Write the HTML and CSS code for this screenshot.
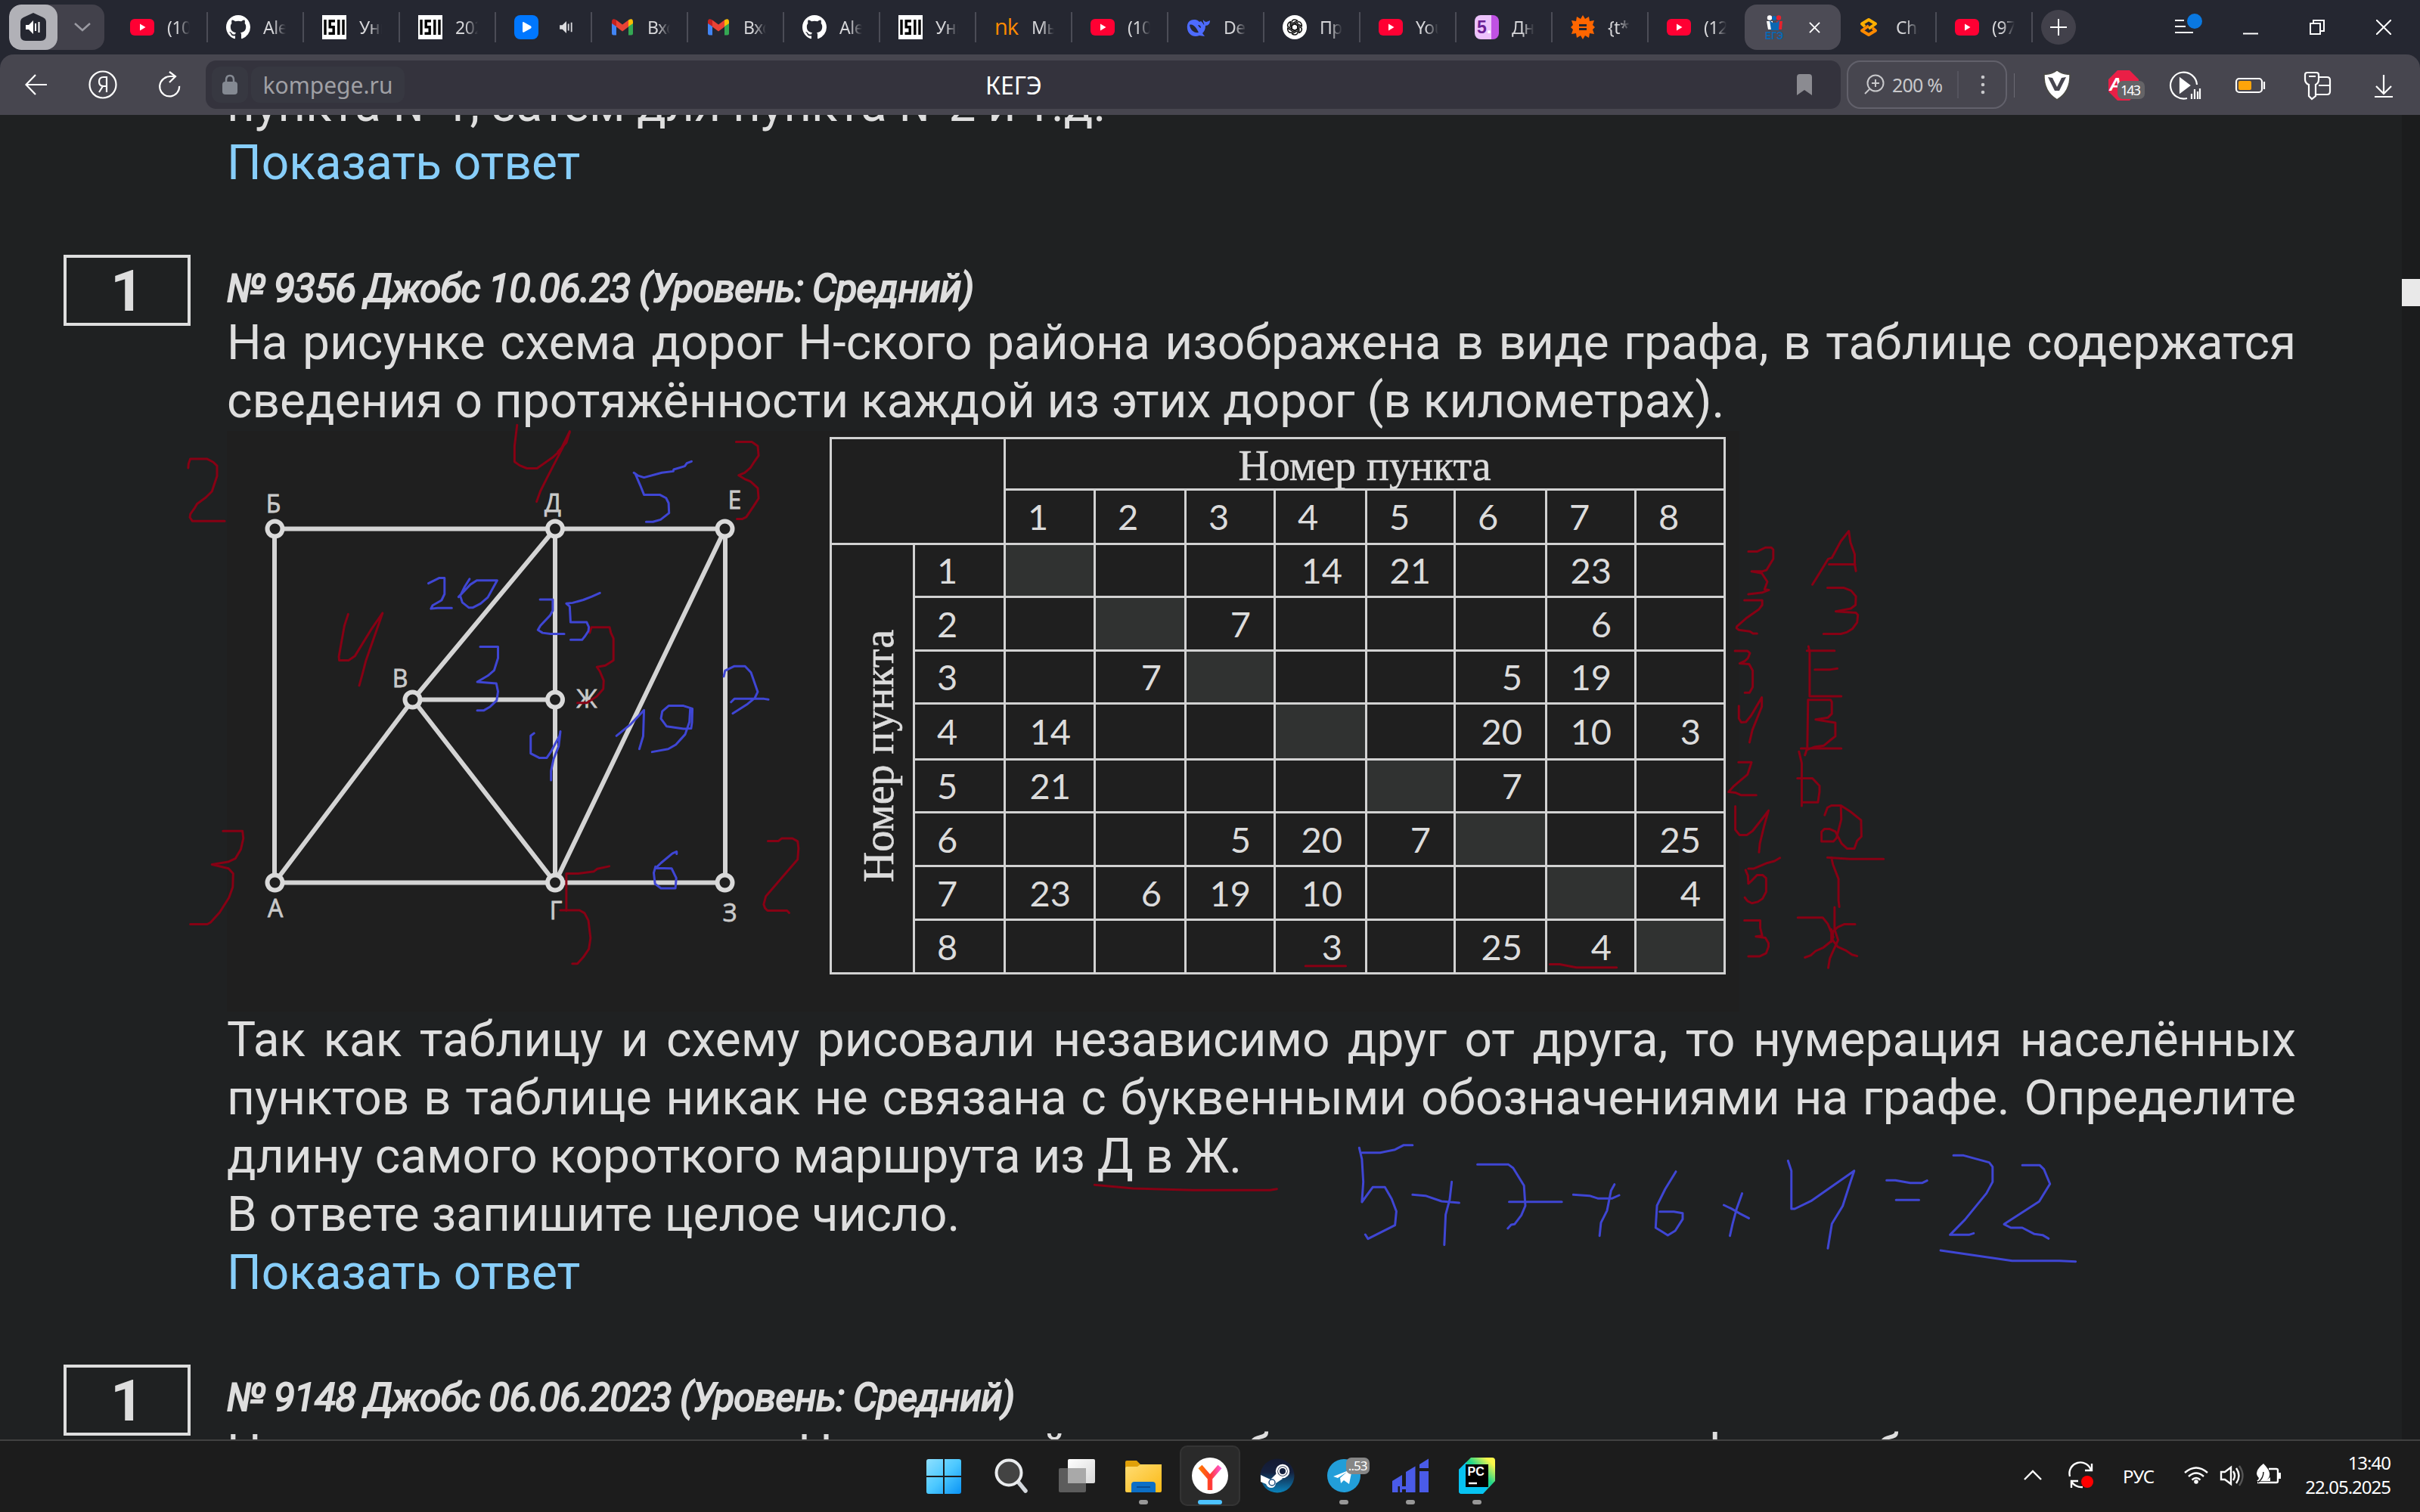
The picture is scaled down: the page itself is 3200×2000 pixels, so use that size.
FILE: index.html
```html
<!DOCTYPE html>
<html lang="ru">
<head>
<meta charset="utf-8">
<title>КЕГЭ</title>
<link rel="stylesheet" href="styles.css">
</head>
<body>
<svg class="defs" width="0" height="0">
  <symbol id="yt" viewBox="0 0 32 32"><rect y="5" width="32" height="22" rx="6" fill="#ff0033"/><path d="M13 11.500l7.500 4.500-7.500 4.500z" fill="#fff"/></symbol>
  <symbol id="gh" viewBox="0 0 16 16"><path fill="#fff" d="M8 0C3.58 0 0 3.58 0 8c0 3.54 2.29 6.53 5.47 7.59.4.07.55-.17.55-.38 0-.19-.01-.82-.01-1.49-2.01.37-2.53-.49-2.69-.94-.09-.23-.48-.94-.82-1.13-.28-.15-.68-.52-.01-.53.63-.01 1.08.58 1.23.82.72 1.21 1.87.87 2.33.66.07-.52.28-.87.51-1.07-1.78-.2-3.64-.89-3.64-3.95 0-.87.31-1.59.82-2.15-.08-.2-.36-1.02.08-2.12 0 0 .67-.21 2.2.82.64-.18 1.32-.27 2-.27s1.36.09 2 .27c1.53-1.04 2.2-.82 2.2-.82.44 1.1.16 1.92.08 2.12.51.56.82 1.27.82 2.15 0 3.07-1.87 3.75-3.65 3.95.29.25.54.73.54 1.48 0 1.07-.01 1.93-.01 2.2 0 .21.15.46.55.38A8.01 8.01 0 0 0 16 8c0-4.42-3.58-8-8-8z"/></symbol>
  <symbol id="uni" viewBox="0 0 32 32"><path fill="#fff" d="M0 0h32v32H0z"/><path fill="none" stroke="#000" stroke-width="3.400" d="M4 6v20M17 7.700H10.200v8h5v8.600H8.500M21.800 6v20M28 6v20"/></symbol>
  <symbol id="gm" viewBox="0 0 32 32"><path fill="#4285f4" d="M2 10v14q0 2.500 2.500 2.500H8V14z"/><path fill="#34a853" d="M30 10v14q0 2.500-2.500 2.500H24V14z"/><path fill="#c5221f" d="M8 15V6.500Q2 3 2 9v2z"/><path fill="#fbbc04" d="M24 15V6.500Q30 3 30 9v2z"/><path fill="#ea4335" d="M8 6.500l8 6 8-6v9l-8 6-8-6z"/></symbol>
  <symbol id="spk" viewBox="0 0 20 18"><path fill="currentColor" d="M0 6h4l6-6v18l-6-6H0z"/><path d="M13 4v10M17.500 2v14" stroke="currentColor" stroke-width="2"/></symbol>
</svg>

<header class="tabbar">
  <div class="audio">
    <div class="audio-on"><svg width="36" height="38" viewBox="0 0 36 38"><path fill="#252731" d="M18 0l13 6q4 2 4 6v18q0 7-7 7H8q-7 0-7-7V12q0-4 4-6z"/><svg x="8" y="10" width="20" height="18" color="#fff"><use href="#spk"/></svg></svg></div>
    <div class="audio-more"><svg width="24" height="14" viewBox="0 0 24 14"><path d="M2 2l10 9L22 2" fill="none" stroke="#9a9aa2" stroke-width="2.500"/></svg></div>
  </div>
  <div class="tab"><svg class="fav"><use href="#yt"/></svg><span class="name">(10</span></div>
  <div class="tab"><svg class="fav"><use href="#gh"/></svg><span class="name">Ale</span></div>
  <div class="tab"><svg class="fav"><use href="#uni"/></svg><span class="name">Уни</span></div>
  <div class="tab"><svg class="fav"><use href="#uni"/></svg><span class="name">202</span></div>
  <div class="tab"><svg class="fav" viewBox="0 0 32 32"><rect width="32" height="32" rx="8" fill="#0077ff"/><path d="M11 9.500q1-1 2 0l9 5q1.500 1.500 0 3l-9 5q-2 .8-2-1z" fill="#fff"/></svg><svg class="snd"><use href="#spk"/></svg></div>
  <div class="tab"><svg class="fav"><use href="#gm"/></svg><span class="name">Вхо</span></div>
  <div class="tab"><svg class="fav"><use href="#gm"/></svg><span class="name">Вхо</span></div>
  <div class="tab"><svg class="fav"><use href="#gh"/></svg><span class="name">Ale</span></div>
  <div class="tab"><svg class="fav"><use href="#uni"/></svg><span class="name">Уни</span></div>
  <div class="tab"><span class="fav nk">nk</span><span class="name">Мы</span></div>
  <div class="tab"><svg class="fav"><use href="#yt"/></svg><span class="name">(10</span></div>
  <div class="tab"><svg class="fav" viewBox="0 0 32 32"><path fill="#4d6bfe" d="M1 18C0 10 4 6 10 6c4 0 5 1 7 3l2-1c2 2 3 3 4 5 1-2-2-4-1-7 1 2 3 3 4 3 2-1 4-1 5-2 0 4-2 7-6 7 0 5-2 8-4 10l3 4-7-1C8 30 2 25 1 18z"/><path fill="#252731" d="M4 13c5-2 9 4 12 10-6 1-11-3-12-10zM15 13q4 0 4 4-3-1-4-4z"/></svg><span class="name">Dee</span></div>
  <div class="tab"><svg class="fav" viewBox="0 0 32 32"><circle cx="16" cy="16" r="16" fill="#fff"/><g fill="none" stroke="#111" stroke-width="1.500"><path id="kn" d="M16 20.500l-4-2.300V10q0-4 4-4 2 0 3.500 1.400L13 11"/><use href="#kn" transform="rotate(60 16 16)"/><use href="#kn" transform="rotate(120 16 16)"/><use href="#kn" transform="rotate(180 16 16)"/><use href="#kn" transform="rotate(240 16 16)"/><use href="#kn" transform="rotate(300 16 16)"/></g></svg><span class="name">При</span></div>
  <div class="tab"><svg class="fav"><use href="#yt"/></svg><span class="name">You</span></div>
  <div class="tab"><span class="fav five">5<i>.</i></span><span class="name">Дне</span></div>
  <div class="tab"><svg class="fav" viewBox="0 0 32 32"><path fill="#ff6600" d="M16 0l3 5 5-3 1 6 6-1-2 6 3 3-3 3 2 6-6-1-1 6-5-3-3 5-3-5-5 3-1-6-6 1 2-6-3-3 3-3-2-6 6 1 1-6 5 3z"/><path stroke="#252731" stroke-width="3" d="M11 13.500h10M11 18.500h10"/></svg><span class="name">{t*</span></div>
  <div class="tab bare"><svg class="fav"><use href="#yt"/></svg><span class="name">(12</span></div>
  <div class="tab active"><svg class="fav" viewBox="0 0 32 32"><circle cx="9" cy="3.500" r="3.200" fill="#fff"/><path fill="#fff" d="M5 8h8v11H7z"/><circle cx="21" cy="3.500" r="3.200" fill="#e8222e"/><path fill="#e8222e" d="M18 8h8l-1 11h-6z"/><path fill="#0a67b2" d="M9 7l4 3h5l4-3-1 13H11z"/><circle cx="15" cy="4" r="3" fill="#0a67b2"/><text x="3" y="32" class="ege" textLength="24" lengthAdjust="spacingAndGlyphs">ЕГЭ</text></svg><svg class="close" viewBox="0 0 16 16"><path d="M1 1l14 14M15 1L1 15" stroke="#fff" stroke-width="2"/></svg></div>
  <div class="tab"><svg class="fav" viewBox="0 0 32 32"><g fill="none" stroke-width="4" stroke-linejoin="round"><path stroke="#ffb000" d="M8 15l-4-3.500L13 6l9 5.500-9 6.500"/><path stroke="#ff8a00" d="M18 17l4 3.500L13 26l-9-5.500L13 14"/></g></svg><span class="name">Cha</span></div>
  <div class="tab"><svg class="fav"><use href="#yt"/></svg><span class="name">(97</span></div>
  <div class="plus"><svg width="24" height="24" viewBox="0 0 24 24"><path d="M12 1v22M1 12h22" stroke="#fff" stroke-width="2"/></svg></div>
  <div class="win">
    <svg width="48" height="40" viewBox="0 0 48 40"><path d="M8 11h12M8 19h14M8 27h24" stroke="#fff" stroke-width="2"/><circle cx="34" cy="12" r="10" fill="#0a78e0"/></svg>
    <svg width="20" height="20" viewBox="0 0 20 20"><path d="M0 18.500h20" stroke="#fff" stroke-width="2"/></svg>
    <svg width="20" height="20" viewBox="0 0 20 20"><path d="M1 5h13v14H1zM5 5V1h14v14h-5" fill="none" stroke="#fff" stroke-width="2"/></svg>
    <svg width="20" height="20" viewBox="0 0 20 20"><path d="M0 0l20 20M20 0L0 20" stroke="#fff" stroke-width="2"/></svg>
  </div>
</header>

<nav class="toolbar">
  <div class="navs">
    <svg width="30" height="28" viewBox="0 0 30 28"><path d="M29 14H2M14 1L1.500 14 14 27" fill="none" stroke="#fff" stroke-width="2.200"/></svg>
    <svg width="38" height="38" viewBox="0 0 38 38"><circle cx="19" cy="19" r="17.500" fill="none" stroke="#fff" stroke-width="2.200"/><path d="M24 29V9h-4q-6 0-6 6t6 6h4M19 21l-5 8" fill="none" stroke="#fff" stroke-width="2.200"/></svg>
    <svg width="32" height="36" viewBox="0 0 32 36"><path d="M10 9A13 13 0 1 0 29 18" fill="none" stroke="#fff" stroke-width="2.200" transform="rotate(8 16 20)"/><path d="M16 1l8 6-8 8M24 7H17q-4 0-7 2" fill="none" stroke="#fff" stroke-width="2.200"/></svg>
  </div>
  <div class="omni">
    <div class="lock"><svg width="22" height="28" viewBox="0 0 22 28"><path d="M6 12V8q0-6 5-6t5 6v4" fill="none" stroke="#848992" stroke-width="2.500"/><rect x="1" y="10" width="20" height="17" rx="4" fill="#848992"/></svg></div>
    <div class="url">kompege.ru</div>
    <div class="ptitle">КЕГЭ</div>
    <svg class="bm" width="22" height="28" viewBox="0 0 22 28"><path fill="#8b8b91" d="M1 4q0-4 4-4h12q4 0 4 4v24l-10-7-10 7z"/></svg>
  </div>
  <div class="zoom">
    <svg width="28" height="28" viewBox="0 0 28 28"><path d="M8 20l-6 6" stroke="#c8c8cb" stroke-width="2"/><circle cx="16" cy="12" r="10.500" fill="none" stroke="#c8c8cb" stroke-width="2"/><path d="M16 7v10M11 12h10" stroke="#c8c8cb" stroke-width="2"/></svg>
    <span class="pct">200 %</span><span class="zdiv"></span>
    <svg class="dots" width="6" height="28" viewBox="0 0 6 28"><g fill="#c8c8cb"><circle cx="3" cy="4" r="2.300"/><circle cx="3" cy="14" r="2.300"/><circle cx="3" cy="24" r="2.300"/></g></svg>
  </div>
  <svg class="exts" width="537" height="78" viewBox="2663 72 537 78">
    <path d="M2663 96v32" stroke="#6b6a73" stroke-width="2"/>
    <path d="M2703 97q9 1 17-5 8 6 17 5 1 23-17 34-18-11-17-34z" fill="#fff" stroke="#4a4a44" stroke-width="1.500"/><path d="M2708 101l6 1 6 12 6-12 6-1-9 18h-6z" fill="#47464f"/>
    <path d="M2800 92h16l12 12v16l-12 12h-16l-12-12v-16z" fill="#ea1f46"/><text x="2789" y="119" class="abp">A</text><rect x="2800" y="106" width="36" height="24" rx="7" fill="#656467"/><text x="2804" y="125" class="cnt" textLength="27">143</text>
    <g fill="none" stroke="#fff" stroke-width="2.200"><path d="M2892 129a17.500 17.500 0 1 1 13-18"/><path d="M2883 103v18l12-9z" fill="#fff"/><path d="M2898 130v-7M2902 130v-13M2906 130v-10M2909 130v-14"/>
    <rect x="2957" y="103" width="34" height="18" rx="4"/><path d="M2994 107v10"/><path d="M3053 126v-15q-5-2-5-7v-6q0-3 3-3h12q3 0 3 3v6q0 5-4 7v15l-5 4zM3053 100h9"/><path d="M3067 101h10q4 0 4 4v15q0 4-4 4h-14M3066 112h15"/>
    <path d="M3152 98v25M3142 113l10 10 10-10M3140 127h24"/></g>
    <rect x="2960" y="106" width="17" height="12" rx="2" fill="#ffa40a"/>
  </svg>
</nav>

<main class="page">
  <div class="content">
    <p class="txt">пункта №1, затем для пункта №2 и т.д.</p>
    <a class="ans">Показать ответ</a>
    <section class="task">
      <div class="num">1</div>
      <div class="body">
        <h2>№ 9356 Джобс 10.06.23 (Уровень: Средний)</h2>
        <p class="txt just">На рисунке схема дорог Н-ского района изображена в виде графа, в таблице содержатся сведения о протяжённости каждой из этих дорог (в километрах).</p>
        <div class="figure">
          <svg class="graph" width="797" height="768" viewBox="300 570 797 768">
            <g fill="none" stroke="#d4d4d4" stroke-width="6"><path d="M363 699.500H959V1167.500H363zM734 699.500V1167.500M734 699.500L546 925.500H734M546 925.500L363 1167.500M546 925.500L734 1167.500L959 699.500"/></g>
            <g fill="#1f1f1f" stroke="#dadada" stroke-width="6"><circle cx="363.500" cy="699.500" r="10"/><circle cx="734" cy="699.500" r="10"/><circle cx="958.500" cy="699.500" r="10"/><circle cx="545.500" cy="925.500" r="10"/><circle cx="734" cy="925.500" r="10"/><circle cx="363.500" cy="1167.500" r="10"/><circle cx="734" cy="1167.500" r="10"/><circle cx="958.500" cy="1167.500" r="10"/></g>
            <g class="lbl"><text x="361.500" y="678">Б</text><text x="731" y="677">Д</text><text x="971.500" y="673">Е</text><text x="529" y="909">В</text><text x="776" y="936">Ж</text><text x="364" y="1213">А</text><text x="735" y="1216">Г</text><text x="965" y="1219">З</text></g>
          </svg>
          <div class="grid">
            <div class="corner"></div><div class="top">Номер пункта</div>
            <b>1</b><b>2</b><b>3</b><b>4</b><b>5</b><b>6</b><b>7</b><b>8</b>
            <div class="side"><span>Номер пункта</span></div>
            <b>1</b><i class="d"></i><i></i><i></i><i>14</i><i>21</i><i></i><i>23</i><i></i>
            <b>2</b><i></i><i class="d"></i><i>7</i><i></i><i></i><i></i><i>6</i><i></i>
            <b>3</b><i></i><i>7</i><i class="d"></i><i></i><i></i><i>5</i><i>19</i><i></i>
            <b>4</b><i>14</i><i></i><i></i><i class="d"></i><i></i><i>20</i><i>10</i><i>3</i>
            <b>5</b><i>21</i><i></i><i></i><i></i><i class="d"></i><i>7</i><i></i><i></i>
            <b>6</b><i></i><i></i><i>5</i><i>20</i><i>7</i><i class="d"></i><i></i><i>25</i>
            <b>7</b><i>23</i><i>6</i><i>19</i><i>10</i><i></i><i></i><i class="d"></i><i>4</i>
            <b>8</b><i></i><i></i><i></i><i>3</i><i></i><i>25</i><i>4</i><i class="d"></i>
          </div>
        </div>
        <p class="txt just">Так как таблицу и схему рисовали независимо друг от друга, то нумерация населённых пунктов в таблице никак не связана с буквенными обозначениями на графе. Определите длину самого короткого маршрута из Д в Ж.</p>
        <p class="txt">В ответе запишите целое число.</p>
        <a class="ans">Показать ответ</a>
      </div>
    </section>
    <section class="task">
      <div class="num">1</div>
      <div class="body">
        <h2>№ 9148 Джобс 06.06.2023 (Уровень: Средний)</h2>
        <p class="txt just">На рисунке схема дорог Н-ского района изображена в виде графа, в таблице содержатся сведения о протяжённости каждой из этих дорог (в километрах).</p>
      </div>
    </section>
  </div>
  <div class="scroll"><div class="thumb"></div></div>
</main>

<footer class="taskbar">
  <div class="apps">
    <div class="app"><svg viewBox="0 0 48 48"><defs><linearGradient id="w" x1="0" y1="0" x2="1" y2="1"><stop offset="0" stop-color="#8fe0ff"/><stop offset=".5" stop-color="#4cc8ff"/><stop offset="1" stop-color="#0a93f5"/></linearGradient></defs><path fill="url(#w)" d="M4 2h19v22H1V5q0-3 3-3zM25 2h19q3 0 3 3v19H25zM1 26h22v22H4q-3 0-3-3zM25 26h22v19q0 3-3 3H25z"/></svg></div>
    <div class="app"><svg viewBox="0 0 48 48"><path d="M35 33l9 11" stroke="#d3d7dc" stroke-width="5.500" stroke-linecap="round"/><circle cx="22" cy="20" r="16.500" fill="#434343" stroke="#eaecee" stroke-width="4"/></svg></div>
    <div class="app"><svg viewBox="0 0 48 48"><defs><linearGradient id="tv" x1="0" y1="0" x2="1" y2="1"><stop offset="0" stop-color="#fff"/><stop offset="1" stop-color="#d8d8d8"/></linearGradient></defs><rect y="14" width="36" height="32" rx="2" fill="#5c5c5c"/><rect x="12" y="2" width="36" height="32" rx="2" fill="url(#tv)"/><path d="M12 14h24v20H12z" fill="#a9a9a9"/></svg></div>
    <div class="app run"><svg viewBox="0 0 48 48"><defs><linearGradient id="fo" x1="0" y1="0" x2="1" y2="1"><stop offset="0" stop-color="#ffdd74"/><stop offset="1" stop-color="#fbb915"/></linearGradient></defs><path fill="#e0a009" d="M0 6q0-2 2-2h13l5 5h26q2 0 2 2v6H0z"/><path fill="url(#fo)" d="M0 14q0-2 2-2h14l4-3h28v35q0 2-2 2H2q-2 0-2-2z"/><path fill="#0c6fc6" d="M8 46V36q0-4 4-4h24q4 0 4 4v10z"/><path d="M15 39h18" stroke="#084c92" stroke-width="2"/></svg></div>
    <div class="app sel run"><svg viewBox="0 0 48 48"><defs><linearGradient id="ya" gradientUnits="userSpaceOnUse" x1="10" y1="0" x2="39" y2="0"><stop offset="0" stop-color="#ff7a00"/><stop offset=".5" stop-color="#ff3a2e"/><stop offset="1" stop-color="#ff58e0"/></linearGradient></defs><circle cx="24" cy="24" r="24" fill="#fff"/><path d="M11 12l13 15v16M24 27l13-15" fill="none" stroke="url(#ya)" stroke-width="6.500"/></svg></div>
    <div class="app"><svg viewBox="0 0 48 48"><defs><linearGradient id="st" x1="0" y1="0" x2="0" y2="1"><stop offset="0" stop-color="#141a31"/><stop offset=".4" stop-color="#15213f"/><stop offset="1" stop-color="#0a84bd"/></linearGradient></defs><circle cx="24" cy="24" r="22.500" fill="url(#st)"/><path d="M2 23l13 6 9-9 7 8-9 6q-1 6-6 6-5 0-7-5l-7-3z" fill="#fff"/><circle cx="31" cy="18" r="8" fill="#15213f" stroke="#fff" stroke-width="2.500"/><circle cx="31" cy="18" r="5" fill="none" stroke="#fff" stroke-width="2"/><circle cx="17" cy="33" r="4" fill="none" stroke="#205080" stroke-width="1.500"/></svg></div>
    <div class="app run"><svg viewBox="0 0 48 48"><circle cx="24" cy="24" r="22" fill="#229ed9"/><path fill="#fff" d="M10 25l25-10-4 20-7-5-4 4-1-7 9-8-12 8z"/></svg><span class="badge">..53</span></div>
    <div class="app run"><svg viewBox="0 0 48 48"><path fill="#4a5be8" d="M0 31l13-8v15h5V19l12.500-7.500V46H18v-4h-5v4h-3v-8H7.500v8H0zM36 9l12-7.500V14H36zM36 18h12v28H36z"/></svg></div>
    <div class="app run"><svg viewBox="0 0 48 48"><defs><linearGradient id="pc" x1="0" y1="1" x2="1" y2="0"><stop offset=".35" stop-color="#07c3f2"/><stop offset=".6" stop-color="#21d789"/><stop offset=".88" stop-color="#fcf84a"/></linearGradient></defs><path fill="url(#pc)" d="M16 0h28q4 0 4 4v27L32 48H4q-4 0-4-4V16z"/><path fill="#07c3f2" d="M0 16L10 6v33h28l-7 9H4q-4 0-4-4z"/><path d="M9 9h30v30H9z"/><text x="11.500" y="24" class="pc">PC</text><path d="M13 34h11" stroke="#fff" stroke-width="2.500"/></svg></div>
  </div>
  <div class="tray">
    <svg width="360" height="94" viewBox="2664 1906 360 94">
      <g fill="none" stroke="#fff" stroke-width="2.400"><path d="M2677 1957l11-11 11 11"/><path d="M2737 1953a14.500 14.500 0 0 1 28-8M2766 1936v9h-9M2739 1968v-9h9M2739 1960q6 8 15 7"/></g>
      <circle cx="2760" cy="1960" r="8" fill="#f00"/>
      <text x="2807" y="1962" class="lang" textLength="42">РУС</text>
      <g fill="none" stroke="#fff" stroke-width="2.400"><path d="M2889 1948q15-13 30 0M2894 1953q10-9 20 0M2898.500 1957.500q5.500-5 11 0"/><path d="M2937 1947h5l8-6v22l-8-6h-5zM2953 1946q4 6 0 12M2957 1942q7 10 0 20"/><path d="M2961 1939q9 13 0 26" stroke="#555"/><path d="M3000 1943h10q2 0 2 2v14q0 2-2 2h-25"/><path d="M3014 1948v8" stroke-width="4"/></g>
      <circle cx="2904" cy="1960" r="2.800" fill="#fff"/><path d="M2993 1936q14 14 4 22l5-4v5h-18q3-2 3-4-8-8 6-19z" fill="#fff"/><path d="M2986 1961q7-6 7-14" stroke="#1c1c1c" stroke-width="1.500" fill="none"/>
    </svg>
    <div class="clock"><span>13:40</span><span>22.05.2025</span></div>
  </div>
</footer>

<!-- pen notes drawn over the task -->
<svg class="ink" width="3200" height="2000" viewBox="0 0 3200 2000">
  <svg x="200" y="540" width="880" height="760" viewBox="0 0 1568 1568" preserveAspectRatio="none">
    <g class="red"><path d="M87 163l1-12 4-13h39l15 9 9 10v28l-12 42-15 17-20 17-5 10-11 18-1 9 6 10h76"/><path d="M862 46l-6 57v43l12 10 17 8h24l38-31 17-18 22-52M986 66l-8 22-46 103-15 35-9 29M986 64l-8 30-20 25"/><path d="M1378 92h37l14 11 2 26-9 15-10 18-14 14-14 7 14 10 14 7 17 18 2 28-11 20-18 31-9 5h-13"/><path d="M464 562l-9 32-13 84 1 10h22l15-12 37-70 28-47-39 129-9 40-7 29"/><path d="M1033 613l4-15h43l3 15 6 15v60l-19 14-20 4 7 12 9 25-1 23-15 20-24 18h-22"/><path d="M169 1154h46l2 20-6 30-13 25-17 9-38 7 39 11 11 14-1 37-9 29-22 40-21 27-8 5H92"/><path d="M1079 1250l-28 7-8 7-37 6h-28v101M964 1370h45l12 8 9 20 5 48-4 30-13 22-14 18h-12"/><path d="M1453 1181h25l7-7h26l12 8 2 19-2 30-40 54-35 47-5 22 3 10 6 7h46l5 6"/></g>
    <g class="blue"><path d="M1137 176l10 8 14 5 42-13 27-4 1-5 26-9 5-8 11-5M1140 178l12 32 9 26h37l15 9 6 14 1 27-20 18-18 6h-16"/><path d="M653 478l26-15h12v44l-7 17-21 14-4 9 16-2h33M750 466l-12 22-10 24 5 18 15 14h10l18-11 17-17 22-46h-48l-15 11-28 34"/><path d="M916 522h30v30l-6 13-23 28-6 12 11 8 19 3h32M1057 504l-19 10-20 9-25 8-15 2 8 8 2 43h38l5 13-1 11-8 14-7 10h-27"/><path d="M775 651h42v31l-9 33-15 15-25 17 45 4 4 22-3 24-16 18-15 10h-15"/><path d="M902 887l-8 7v48l20 12h18l10-17 20-43 2-12-4 40-12 35-6 33v25"/><path d="M1349 732l3-16 22-12h25l14 17 16 53-7 17-17 16-35 26M1366 802l8-9h70l10 2"/><path d="M1096 894l34-32 31-38-2 71-9 35M1275 820l-21-8h-35l-15 15-3 20 13 21 40 7 18-1 2-16 1-38M1270 818l-2 38-10 34-22 28-18 12-38 8"/><path d="M1238 1216v-6l-10 5-27 26-13 14 38 1 11 26-2 28h-34l-14-12-3-30 4-17"/></g>
  </svg>
  <svg x="1700" y="560" width="820" height="740" viewBox="0 0 1568 1568" preserveAspectRatio="none">
    <g class="red"><path d="M1170 359h23l20-11h15l5 6v26l-17 31-11 4h-27l26 5 14 24-7 21 11 2-16 7-36 5"/><path d="M1332 452l40-72 9-3 23-47 20-28 4 31 11 34v29l3 18M1374 395h66"/><path d="M1160 496h45v13l-9 13-30 23-25 24-1 5 6 5 28 4 8 6h10"/><path d="M1370 461h42l18 8 12 16-1 24-12 10-38 8 51 4 5 6-2 21-12 18-13 9-16 5h-44"/><path d="M1136 638h32l6 6-5 14-8 8-13 7 24 2 9 18v46l-8 16h-12"/><path d="M1322 625l3 15v125h80M1318 637h70M1338 690h40l17-3"/><path d="M1146 792v35l6 11 12-1 13-18 27-51v26l-24 66-7 34"/><path d="M1322 775h56l3 6v33l-10 11-31 5 50 9v38l-15 13-14 13-24 4-17 7M1321 775l-2 135-6 20M1303 911h102"/><path d="M1145 950h33l-10 34-36 34-12 15 17 2 15 7h38"/><path d="M1298 920l7 32v120M1294 995h38l18 21v16l-4 30h-40"/><path d="M1137 1073v66l11 15h18l15-12 32-45 8-12-11 43-11 50-2 24"/><path d="M1363 1098l7-21 10-6h24l24 17 27 24 1 46-11 12-7 22h-18l-14-14-16-34-14-7h-14l-7 8v27h30l8-10 12-52-1-36"/><path d="M1170 1248h14l34-16 18-5 14-9M1163 1252l6 16 1 22 10-10 12-14h14l9 9v38l-9 19-12 9-15 4-11-6-7-10"/><path d="M1370 1217l28 2 30 2h84M1380 1217l4 20 14 40v60l2 18"/><path d="M1160 1393h40v21l5 22-16 2 24 4 8 15v10l-6 18-17 9h-28"/><path d="M1295 1385h63l13 18 14 37-5 11-20 18-20 10-12 12-15 6M1440 1404h-28l-16 8-12 12-1 24 13 19 20 10 16 12 13 4M1388 1356v62l9 30-13 32-8 20-4 26M1380 1418v35"/><path d="M50 1521h102M668 1516h25l42 9h102"/></g>
  </svg>
  <svg x="1400" y="1450" width="1400" height="260" viewBox="0 0 1568 780" preserveAspectRatio="none">
    <path class="red" d="M53 352l57 14 90 7h113l10-5"/>
    <g class="blue"><path d="M445 205l4 45 2 90-2 80 16-59h18l10 46 7 50-2 55-40 54-4-17M449 224h27l22-12 13-18h13"/><path d="M524 391l19 4 24 22 26 6M582 340l-3 70-6 60-2 120"/><path d="M620 271h46l7 14 16 70 2 80-6 38-10 35-5 2-5 15M667 419h78"/><path d="M762 391l24 4 13 11h20l11-13M823 350l-5 24-6 80-9 48-2 52"/><path d="M914 299l-16 70-12 65-2 88 11 18 7 12 11-18 11-46v-24l-13-6h-21"/><path d="M985 432l11 14 13 20 13 18M1012 386l-8 60-6 60-4 48"/><path d="M1080 256l5 40v151h5l24-31 64-120-5 40-12 100-16 70-6 98"/><path d="M1226 334h13l22 10h18l7-9M1240 412h34"/><path d="M1325 235h15l38 28 5 17v60l-9 45-32 105-22 60h28l7-6"/><path d="M1427 274h26l6 16 9 58-16 70-52 90 10 14h17l18 25 12 4 9 14"/><path d="M1306 612l106 41h70l24 3"/></g>
  </svg>
</svg>
</body>
</html>
```
FILE: styles.css
```css
* { box-sizing: border-box; }
body {
  margin: 0;
  width: 3200px;
  height: 2000px;
  overflow: hidden;
  display: flex;
  flex-direction: column;
  background: #252731;
  color: #dedede;
  font-family: "Noto Sans", sans-serif;
}
svg { display: block; flex: none; }
p, h2 { margin: 0; }
.defs { position: absolute; }

/* tab strip */
.tabbar { height: 72px; flex: none; display: flex; align-items: center; padding-left: 12px; }
.audio { display: flex; width: 126px; height: 60px; border-radius: 16px; overflow: hidden; background: #42414b; margin-right: 10px; }
.audio-on { width: 64px; background: #b1b1b7; display: flex; align-items: center; justify-content: center; border-radius: 16px; }
.audio-more { flex: 1; display: flex; align-items: center; justify-content: center; padding-left: 4px; }
.tab { width: 127px; height: 40px; flex: none; display: flex; align-items: center; padding-left: 24px; border-right: 2px solid #4b4c56; }
.tab.bare { border-color: transparent; }
.tab.active { height: 60px; border: 0; border-radius: 16px; background: #4c4b55; }
.fav { width: 32px; height: 32px; flex: none; }
.name {
  width: 30px;
  margin-left: 17px;
  overflow: hidden;
  white-space: nowrap;
  font-size: 23px;
  letter-spacing: -.5px;
  color: #d6d6d9;
  -webkit-mask-image: linear-gradient(90deg, #000 45%, transparent);
  mask-image: linear-gradient(90deg, #000 45%, transparent);
}
.snd { width: 20px; height: 16px; margin-left: 27px; color: #dcdcdf; }
.close { width: 15px; height: 15px; margin-left: 29px; }
.nk { font: 29px/30px "Open Sans", sans-serif; letter-spacing: -1px; color: #ff8b00; }
.five { border-radius: 8px; background: linear-gradient(90deg, #ecc2fb 70%, #c052e4 70%); font: bold 23px/32px "Liberation Sans", sans-serif; color: #6b1f95; padding-left: 3px; }
.five i { color: #fff; font-style: normal; }
.ege { font: bold 14.500px "Liberation Sans", sans-serif; fill: #0a67b2; }
.plus { width: 46px; height: 46px; margin-left: 11px; border-radius: 50%; background: #42414b; display: flex; align-items: center; justify-content: center; }
.win { flex: 1; display: flex; align-items: center; justify-content: flex-end; gap: 68px; padding-right: 38px; }
.win svg:first-child { margin-right: -18px; }

/* toolbar */
.toolbar { height: 80px; flex: none; display: flex; align-items: center; background: #47464f; border-radius: 18px 18px 0 0; }
.navs { width: 272px; display: flex; align-items: center; padding-left: 33px; gap: 54px; }
.navs svg:last-child { margin-left: -1px; }
.omni { width: 2162px; height: 64px; display: flex; align-items: center; background: #34333d; border-radius: 14px; padding: 0 37px 0 8px; }
.lock, .url { height: 48px; border-radius: 12px; background: #373841; display: flex; align-items: center; justify-content: center; }
.lock { width: 48px; }
.url { width: 203px; margin-left: 4px; font-size: 30px; color: #a0a0a5; }
.ptitle { flex: 1; padding-left: 768px; font-size: 32px; color: #fff; }
.zoom { width: 212px; height: 64px; margin: 0 9px 0 8px; border: 2px solid #62616b; border-radius: 18px; display: flex; align-items: center; padding-left: 20px; }
.pct { width: 68px; margin-left: 10px; font-size: 25px; letter-spacing: -.8px; color: #c8c8cb; white-space: nowrap; }
.zdiv { width: 2px; height: 36px; margin: 0 29px 0 18px; background: #55545e; }
.abp { font: italic bold 24px "Liberation Sans", sans-serif; fill: #fff; }
.cnt { font: 18px "Noto Sans", sans-serif; fill: #fff; }

/* page */
.page { height: 1752px; flex: none; display: flex; overflow: hidden; background: #1f2122; font-family: Roboto, sans-serif; }
.content { width: 3176px; padding-left: 300px; margin-top: -51px; }
.txt, .ans { display: block; width: 2736px; font-size: 64px; line-height: 76.8px; }
.just { text-align: justify; }
.ans { color: #87cefa; }
.task { position: relative; display: flex; margin: 82.500px 0 0 -216px; }
.num { width: 168px; height: 94px; flex: none; border: 4px solid #dedede; font: bold 76.8px/88px Roboto, sans-serif; text-align: center; }
.body { margin-left: 48px; padding-top: 13.500px; }
h2 { height: 65.400px; font: italic 400 51.2px/61.4px Roboto, sans-serif; letter-spacing: -.82px; -webkit-text-stroke: 2px #dedede; white-space: nowrap; }
.figure { width: 2000px; height: 768.800px; display: flex; align-items: flex-start; background: #1f1f1f; }
.lbl { font: 32px "Open Sans", sans-serif; fill: #c9c9c9; stroke: #c9c9c9; stroke-width: .8px; text-anchor: middle; }
.grid {
  margin-top: 8px;
  display: grid;
  grid-template-columns: 110px 120px 119px 120px 118px 121px 117px 121px 118px 118px;
  grid-template-rows: 68px 72px 70px 71px 70px 74px 70px 71px 71px 71px;
  border: solid #d2d2d2;
  border-width: 0 3px 3px 0;
  font: 47px Lato, sans-serif;
  color: #dcdcdc;
}
.grid > * { border: solid #d2d2d2; border-width: 3px 0 0 3px; display: flex; align-items: center; font-style: normal; font-weight: 400; }
.grid b { padding-left: 29px; }
.grid i { justify-content: flex-end; padding-right: 30px; }
.grid .d { background: #303231; }
.corner { grid-area: 1 / 1 / 3 / 3; }
.grid .top, .grid .side { justify-content: center; font: 56px/60px "Liberation Serif", serif; -webkit-text-stroke: .6px #dcdcdc; }
.grid .top { grid-area: 1 / 3 / 2 / 11; padding-top: 5px; }
.grid .side { grid-area: 3 / 1 / 11 / 2; padding: 0 0 6px 17px; }
.side span { writing-mode: vertical-rl; transform: rotate(180deg); }
.scroll { width: 24px; background: #1b1c1d; padding-top: 217px; }
.thumb { height: 36px; background: #e9e9e9; }

/* taskbar */
.taskbar { height: 96px; flex: none; display: flex; border-top: 2px solid #414141; background: #1c1c1c; }
.apps { display: flex; padding-left: 1204px; }
.app { position: relative; width: 80px; height: 80px; margin: 6px 4.050px 0; padding: 16px; border-radius: 10px; }
.app svg { width: 48px; height: 48px; }
.sel { background: #2a2a2a; box-shadow: inset 0 0 0 2px #343434; }
.run::after { content: ""; display: block; width: 12px; height: 6px; margin: 8px auto 0; border-radius: 3px; background: #989898; }
.sel::after { width: 32px; background: #4cc2ff; }
.badge { position: absolute; left: 43px; top: 16px; width: 31px; height: 22px; border-radius: 7px; background: #868686; color: #fff; font-size: 17px; line-height: 21px; text-align: center; letter-spacing: -1px; }
.pc { font: bold 16px "Liberation Sans", sans-serif; fill: #fff; }
.tray { flex: 1; display: flex; justify-content: flex-end; padding-right: 38px; }
.lang { font: 24px "Noto Sans", sans-serif; fill: #fff; }
.clock { width: 138px; display: flex; flex-direction: column; align-items: flex-end; padding: 13px 1px 0 0; font-size: 24px; line-height: 32px; letter-spacing: -1px; color: #fff; }

/* pen notes */
.ink { position: absolute; left: 0; top: 0; }
.ink path { fill: none; stroke-width: 3px; stroke-linecap: round; stroke-linejoin: round; vector-effect: non-scaling-stroke; }
.red, .red path, .ink .red { stroke: #870014; }
.blue path { stroke: #3f46d4; }
```
